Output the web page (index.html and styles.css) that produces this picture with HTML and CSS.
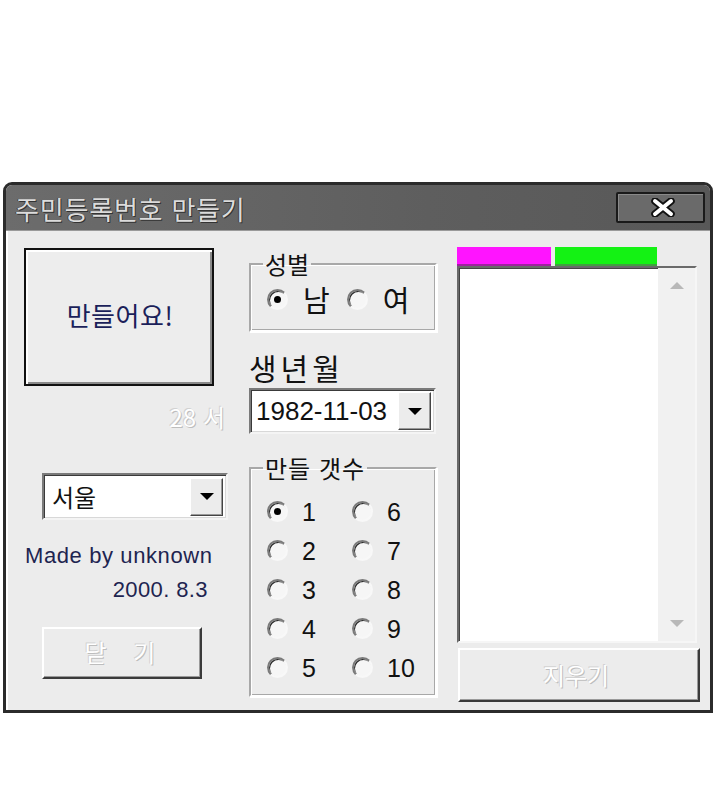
FILE: index.html
```html
<!DOCTYPE html>
<html lang="ko">
<head>
<meta charset="utf-8">
<title>주민등록번호 만들기</title>
<link rel="stylesheet" href="styles.css">
</head>
<body>
<div class="window">
  <div class="titlebar">
    <span class="title">주민등록번호 만들기</span>
    <span class="close">
      <svg width="24" height="19" viewBox="0 0 24 19">
        <path d="M4 3 L20 16 M20 3 L4 16" stroke="#111" stroke-width="7.5" stroke-linecap="round" fill="none"/>
        <path d="M4 3 L20 16 M20 3 L4 16" stroke="#fff" stroke-width="4" stroke-linecap="round" fill="none"/>
      </svg>
    </span>
  </div>
  <div class="client">
    <div class="col-left">
      <div class="bigbtn"><span>만들어요!</span></div>
      <div class="age disabled">28 서</div>
      <div class="combo combo-city">
        <span class="combo-text">서울</span>
        <span class="drop"><span class="tri"></span></span>
      </div>
      <div class="credit">Made by unknown</div>
      <div class="date">2000. 8.3</div>
      <div class="btn btn-close"><span class="disabled">닫 기</span></div>
    </div>
    <div class="col-mid">
      <fieldset class="group group-sex">
        <legend>성별</legend>
        <div class="sex-row">
          <span class="radio checked"></span><span class="sex-label">남</span>
          <span class="radio"></span><span class="sex-label">여</span>
        </div>
      </fieldset>
      <div class="birth-label">생년월</div>
      <div class="combo combo-date">
        <span class="combo-text digits">1982-11-03</span>
        <span class="drop"><span class="tri"></span></span>
      </div>
      <fieldset class="group group-count">
        <legend>만들 갯수</legend>
        <div class="count-grid">
          <div class="opt"><span class="radio checked"></span><span class="num">1</span></div>
          <div class="opt"><span class="radio"></span><span class="num">6</span></div>
          <div class="opt"><span class="radio"></span><span class="num">2</span></div>
          <div class="opt"><span class="radio"></span><span class="num">7</span></div>
          <div class="opt"><span class="radio"></span><span class="num">3</span></div>
          <div class="opt"><span class="radio"></span><span class="num">8</span></div>
          <div class="opt"><span class="radio"></span><span class="num">4</span></div>
          <div class="opt"><span class="radio"></span><span class="num">9</span></div>
          <div class="opt"><span class="radio"></span><span class="num">5</span></div>
          <div class="opt"><span class="radio"></span><span class="num">10</span></div>
        </div>
      </fieldset>
    </div>
    <div class="col-right">
      <div class="bars">
        <span class="bar bar-magenta"></span>
        <span class="bar bar-green"></span>
      </div>
      <div class="listbox">
        <div class="list-area"></div>
        <div class="scroll">
          <span class="arrow up"></span>
          <span class="arrow down"></span>
        </div>
      </div>
      <div class="btn btn-clear"><span class="disabled">지우기</span></div>
    </div>
  </div>
</div>
</body>
</html>
```

FILE: styles.css
```css
* { box-sizing: border-box; }
html, body { margin: 0; padding: 0; background: #ffffff; }
body {
  font-family: "Noto Sans CJK KR", "Noto Sans", sans-serif;
  width: 714px;
  height: 801px;
  overflow: hidden;
}
.window {
  margin: 182px 0 0 3px;
  width: 710px;
  height: 531px;
  border: 3px solid #2b2b2b;
  border-radius: 9px 9px 0 0;
  background: #ececec;
  display: flex;
  flex-direction: column;
  overflow: hidden;
}
.titlebar {
  height: 46px;
  flex: none;
  background: linear-gradient(to right, #6c6c6c, #5e5e5e 60%, #585858);
  display: flex;
  align-items: center;
  justify-content: space-between;
  padding: 0 5px 0 9px;
  border-bottom: 1px solid #9a9a9a;
}
.title {
  color: #dcdcdc;
  font-size: 26px;
  line-height: 30px;
  letter-spacing: 0.8px;
  text-shadow: 1px 1px 0 #333, -1px 0 0 #444;
  margin-top: 2px;
}
.close {
  width: 89px;
  height: 31px;
  border: 2px solid #1a1a1a;
  border-radius: 2px;
  background: #6a6a6a;
  box-shadow: inset 1px 1px 0 #8a8a8a;
  display: flex;
  align-items: center;
  justify-content: center;
}
.close svg { display: block; margin-left: 4px; }
.client {
  flex: 1;
  display: flex;
  padding: 16px 0 0 16px;
  border-left: 2px solid #ffffff;
}
.col-left {
  width: 204px;
  display: flex;
  flex-direction: column;
  align-items: flex-start;
}
.col-mid {
  width: 188px;
  margin-left: 21px;
  display: flex;
  flex-direction: column;
}
.col-right {
  width: 243px;
  margin-left: 20px;
  display: flex;
  flex-direction: column;
}
.bigbtn {
  margin-top: 1px;
  width: 190px;
  height: 138px;
  border: 2px solid #111;
  box-shadow: inset 2px 2px 0 #ffffff, inset -2px -2px 0 #8a8a8a;
  background: #ededed;
  display: flex;
  align-items: center;
  justify-content: center;
}
.bigbtn span {
  color: #1b1f5a;
  font-size: 26px;
  line-height: 30px;
  letter-spacing: 0.5px;
  margin-top: -4px;
  margin-left: 2px;
}
.disabled {
  color: #ffffff;
  text-shadow: 1px 1px 0 #bdbdbd, -1px -1px 0 #d2d2d2;
}
.age {
  align-self: flex-end;
  margin-right: 3px;
  margin-top: 17px;
  font-size: 24px;
  line-height: 28px;
}
.combo {
  background: #ffffff;
  border: 2px solid;
  border-color: #7a7a7a #f4f4f4 #f4f4f4 #7a7a7a;
  box-shadow: inset 1px 1px 0 #3a3a3a, inset -1px -1px 0 #d8d8d8;
  display: flex;
  align-items: center;
  justify-content: space-between;
  padding: 3px 3px 3px 8px;
}
.combo-city {
  margin-top: 42px;
  margin-left: 18px;
  width: 186px;
  height: 47px;
}
.combo-text {
  font-size: 24px;
  line-height: 28px;
  color: #111;
}
.digits {
  font-family: "Liberation Sans", Arial, sans-serif;
  font-size: 26px;
  margin-left: -3px;
}
.drop {
  width: 33px;
  height: 38px;
  background: #ececec;
  border: 1px solid;
  border-color: #ffffff #444 #444 #ffffff;
  box-shadow: inset -1px -1px 0 #999;
  display: flex;
  align-items: center;
  justify-content: center;
}
.tri {
  width: 0;
  height: 0;
  border-left: 7px solid transparent;
  border-right: 7px solid transparent;
  border-top: 7px solid #000;
}
.credit {
  margin-top: 23px;
  margin-left: 1px;
  font-family: "Liberation Sans", Arial, sans-serif;
  font-size: 22px;
  line-height: 26px;
  letter-spacing: 0.6px;
  color: #1e2450;
}
.date {
  align-self: flex-end;
  margin-right: 20px;
  margin-top: 8px;
  font-family: "Liberation Sans", Arial, sans-serif;
  font-size: 22px;
  line-height: 26px;
  letter-spacing: 0.4px;
  color: #1e2450;
}
.btn {
  background: #ececec;
  border: 2px solid;
  border-color: #ffffff #3a3a3a #3a3a3a #ffffff;
  box-shadow: inset -1px -1px 0 #9a9a9a;
  display: flex;
  align-items: center;
  justify-content: center;
  font-size: 24px;
  line-height: 28px;
}
.btn-close {
  margin-top: 24px;
  margin-left: 18px;
  width: 160px;
  height: 52px;
}
.btn-close span { letter-spacing: 10px; margin-left: 6px; margin-top: -2px; }
.group {
  margin: 0;
  padding: 0;
  border: 2px solid;
  border-color: #a8a8a8 #ffffff #ffffff #a8a8a8;
  box-shadow: 1px 1px 0 #ffffff, inset 1px 1px 0 #ffffff, inset -1px -1px 0 #a8a8a8;
  min-width: 0;
}
.group legend {
  font-size: 24px;
  line-height: 26px;
  padding: 0 2px;
  margin-left: 12px;
  color: #111;
}
.group-count legend { letter-spacing: 1px; }
.group-sex {
  margin-top: 4px;
  height: 81px;
}
.sex-row {
  display: flex;
  align-items: center;
  padding: 6px 0 0 16px;
}
.sex-label {
  font-size: 29px;
  line-height: 32px;
  margin-left: 15px;
  margin-right: 17px;
  color: #111;
}
.radio {
  width: 21px;
  height: 21px;
  border-radius: 50%;
  border: 2px solid;
  border-color: #7a7a7a #f8f8f8 #f8f8f8 #7a7a7a;
  background: #f6f6f6;
  box-shadow: inset 1px 1px 0 #2e2e2e;
  display: inline-flex;
  align-items: center;
  justify-content: center;
  flex: none;
}
.radio.checked::after {
  content: "";
  width: 7px;
  height: 7px;
  border-radius: 50%;
  background: #000;
}
.birth-label {
  margin-top: 18px;
  font-size: 30px;
  line-height: 34px;
  letter-spacing: 4px;
  color: #111;
}
.combo-date {
  margin-top: 4px;
  width: 187px;
  height: 46px;
}
.group-count {
  margin-top: 21px;
  height: 242px;
}
.count-grid {
  display: grid;
  grid-template-columns: 85px 85px;
  grid-auto-rows: 39px;
  padding: 11px 0 0 16px;
}
.opt {
  display: flex;
  align-items: center;
}
.num {
  font-family: "Liberation Sans", Arial, sans-serif;
  font-size: 25px;
  line-height: 30px;
  margin-left: 14px;
  color: #111;
}
.bars {
  display: flex;
  gap: 4px;
  height: 19px;
}
.bar { display: block; height: 19px; }
.bar-magenta { width: 94px; background: #ff14ff; border-bottom: 2px solid #a020a0; }
.bar-green { width: 102px; background: #14f214; border-bottom: 2px solid #40a040; }
.listbox {
  width: 240px;
  height: 377px;
  background: #ffffff;
  border: 2px solid;
  border-color: #6a6a6a #f6f6f6 #f6f6f6 #6a6a6a;
  box-shadow: inset 1px 1px 0 #444;
  display: flex;
}
.list-area { flex: 1; }
.scroll {
  width: 37px;
  background: #f1f1f1;
  display: flex;
  flex-direction: column;
  justify-content: space-between;
  align-items: center;
  padding: 14px 0 14px 0;
}
.arrow {
  width: 0;
  height: 0;
  border-left: 7px solid transparent;
  border-right: 7px solid transparent;
}
.arrow.up { border-bottom: 7px solid #b8b8b8; }
.arrow.down { border-top: 7px solid #b8b8b8; }
.btn-clear {
  margin-top: 5px;
  margin-left: 1px;
  width: 242px;
  height: 54px;
}
.btn-clear span { margin-left: -6px; }
```
